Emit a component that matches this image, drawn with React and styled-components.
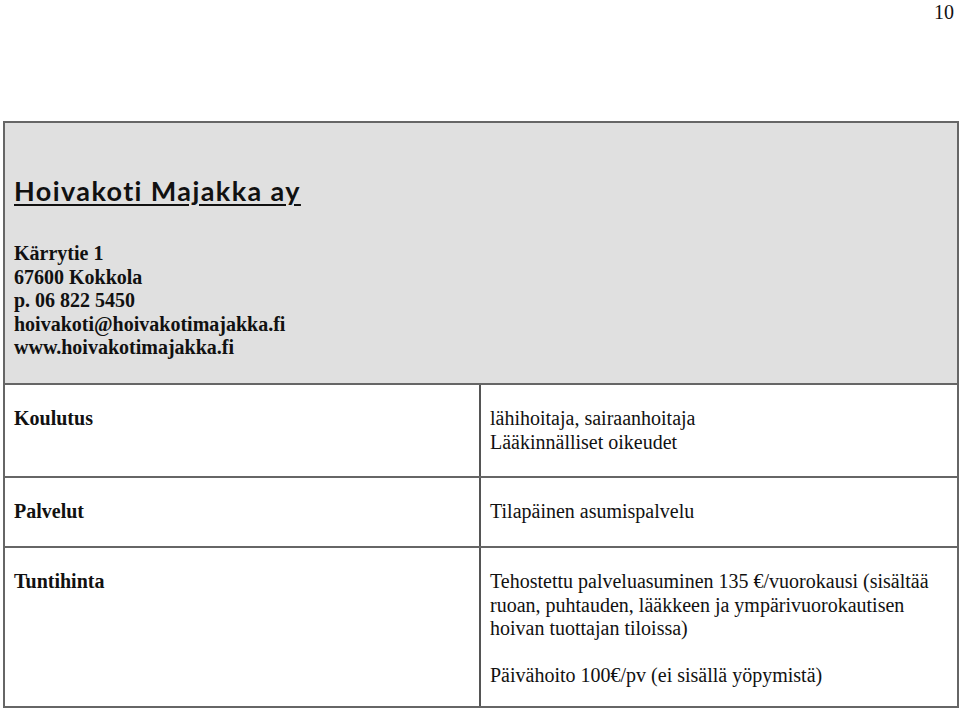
import React from 'react';
import styled, {createGlobalStyle} from 'styled-components';

const GlobalStyle = createGlobalStyle`
  html, body {
    margin: 0;
    padding: 0;
    background: #fff;
  }
  body {
    font-family: "Liberation Serif", "Times New Roman", serif;
    color: #111;
  }
`;

const Page = styled.div`
  width: 960px;
  padding: 0 1px 0 3px;
  box-sizing: border-box;
`;

const PageNumber = styled.div`
  height: 121px;
  text-align: right;
  padding: 1px 5px 0 0;
  box-sizing: border-box;
  font-size: 20px;
  line-height: 23px;
`;

const Table = styled.div`
  border: 2px solid #666;
  width: 956px;
  box-sizing: border-box;
`;

const HeaderCell = styled.div`
  background: #e0e0e0;
  padding: 52px 9px 20px;
  height: 260px;
  box-sizing: border-box;
`;

const Title = styled.h1`
  margin: 0 0 35px;
  font-family: Lato, "Open Sans", sans-serif;
  font-weight: 700;
  font-size: 27px;
  letter-spacing: 1.4px;
  line-height: 32px;
  text-decoration: underline;
  text-decoration-thickness: 2px;
  text-underline-offset: 3px;
`;

const Contact = styled.div`
  font-weight: 700;
  font-size: 20px;
  line-height: 23.5px;
`;

const Row = styled.div`
  display: grid;
  grid-template-columns: 476px 1fr;
  border-top: 2px solid #666;
  height: ${p => p.$height}px;
  box-sizing: border-box;
`;

const Label = styled.div`
  border-right: 2px solid #555;
  padding: 22px 9px 0;
  font-weight: 700;
  font-size: 20px;
  line-height: 23.5px;
`;

const Value = styled.div`
  padding: 22px 9px 0;
  font-size: 20px;
  line-height: 23.5px;
`;

const Paragraph = styled.p`
  margin: 0 0 23.5px;
  &:last-child {
    margin-bottom: 0;
  }
`;

export default function App() {
  return (
    <Page>
      <GlobalStyle />
      <PageNumber>10</PageNumber>
      <Table>
        <HeaderCell>
          <Title>Hoivakoti Majakka ay</Title>
          <Contact>
            Kärrytie 1<br />
            67600 Kokkola<br />
            p. 06 822 5450<br />
            hoivakoti@hoivakotimajakka.fi<br />
            www.hoivakotimajakka.fi
          </Contact>
        </HeaderCell>
        <Row $height={93}>
          <Label>Koulutus</Label>
          <Value>
            lähihoitaja, sairaanhoitaja<br />
            Lääkinnälliset oikeudet
          </Value>
        </Row>
        <Row $height={70}>
          <Label>Palvelut</Label>
          <Value>Tilapäinen asumispalvelu</Value>
        </Row>
        <Row $height={160}>
          <Label>Tuntihinta</Label>
          <Value>
            <Paragraph>
              Tehostettu palveluasuminen 135 €/vuorokausi (sisältää
              <br />
              ruoan, puhtauden, lääkkeen ja ympärivuorokautisen
              <br />
              hoivan tuottajan tiloissa)
            </Paragraph>
            <Paragraph>Päivähoito 100€/pv (ei sisällä yöpymistä)</Paragraph>
          </Value>
        </Row>
      </Table>
    </Page>
  );
}
